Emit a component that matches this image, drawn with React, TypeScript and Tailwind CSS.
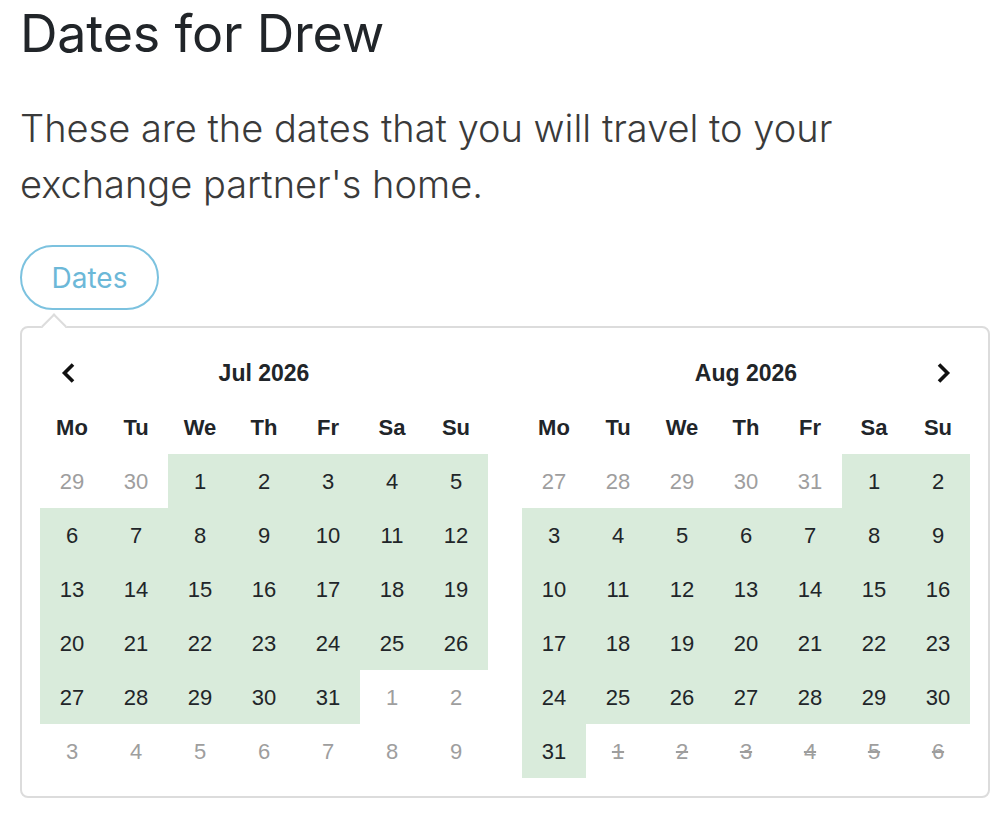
import React from 'react';

type Day = { n: number; state: 'in' | 'out' | 'off' };

const buildMonth = (year: number, month: number, strikeNext: boolean): Day[] => {
  const first = new Date(year, month, 1);
  const lead = (first.getDay() + 6) % 7;
  const daysIn = new Date(year, month + 1, 0).getDate();
  const prevDays = new Date(year, month, 0).getDate();
  const cells: Day[] = [];
  for (let i = lead; i > 0; i--) cells.push({ n: prevDays - i + 1, state: 'out' });
  for (let d = 1; d <= daysIn; d++) cells.push({ n: d, state: 'in' });
  let next = 1;
  while (cells.length < 42) cells.push({ n: next++, state: strikeNext ? 'off' : 'out' });
  return cells;
};

const weekdays = ['Mo', 'Tu', 'We', 'Th', 'Fr', 'Sa', 'Su'];

const Chevron: React.FC<{ dir: 'left' | 'right' }> = ({ dir }) => (
  <svg width="15" height="22" viewBox="0 0 15 22" fill="none">
    <path
      d={dir === 'left' ? 'M12 2.5 L3.5 11 L12 19.5' : 'M3 2.5 L11.5 11 L3 19.5'}
      stroke="#111"
      strokeWidth="3.6"
      strokeLinecap="butt"
      strokeLinejoin="miter"
    />
  </svg>
);

const Month: React.FC<{ title: string; days: Day[]; nav: 'left' | 'right' }> = ({ title, days, nav }) => (
  <div className="w-[448px]">
    <div className="grid grid-cols-7 h-[54px] items-center">
      <div className="flex justify-start pl-[21px]">{nav === 'left' && <Chevron dir="left" />}</div>
      <div className="col-span-5 text-center font-bold text-[23px] text-[#212529]">{title}</div>
      <div className="flex justify-end pr-[19px]">{nav === 'right' && <Chevron dir="right" />}</div>
    </div>
    <div className="grid grid-cols-7 h-[54px] items-center">
      {weekdays.map((w) => (
        <div key={w} className="text-center font-bold text-[22px] text-[#212529]">
          {w}
        </div>
      ))}
    </div>
    <div className="grid grid-cols-7">
      {days.map((d, i) => (
        <div
          key={i}
          className={
            d.state === 'in'
              ? 'h-[54px] flex items-center justify-center text-[22px] text-[#212529] bg-[#d9ebdb]'
              : d.state === 'off'
              ? 'h-[54px] flex items-center justify-center text-[22px] text-[#9e9e9e] line-through'
              : 'h-[54px] flex items-center justify-center text-[22px] text-[#9e9e9e]'
          }
        >
          {d.n}
        </div>
      ))}
    </div>
  </div>
);

export default function App() {
  const jul = buildMonth(2026, 6, false);
  const aug = buildMonth(2026, 7, true);

  return (
    <div className="min-h-screen bg-white px-5 pt-[2px]" style={{ fontFamily: 'Inter, "Noto Sans", sans-serif' }}>
      <h1 className="text-[52px] leading-[64px] font-normal text-[#212529] tracking-[-0.2px]">Dates for Drew</h1>
      <p className="mt-[34px] text-[38px] leading-[56px] font-light text-[#3a3a3a] w-[880px]">
        These are the dates that you will travel to your exchange partner's home.
      </p>
      <button className="mt-[33px] h-[65px] w-[139px] rounded-full border-2 border-[#7cc2df] text-[28px] text-[#6cb8d8] font-normal">
        Dates
      </button>
      <div className="relative mt-[16px] w-[970px] rounded-lg border-2 border-[#dcdcdc] bg-white p-[18px] font-['Liberation_Sans',Arial,sans-serif]">
        <div className="absolute -top-[11px] left-[23px] h-[18px] w-[18px] rotate-45 border-l-2 border-t-2 border-[#dcdcdc] bg-white" />
        <div className="flex gap-[34px]">
          <Month title="Jul 2026" days={jul} nav="left" />
          <Month title="Aug 2026" days={aug} nav="right" />
        </div>
      </div>
    </div>
  );
}
